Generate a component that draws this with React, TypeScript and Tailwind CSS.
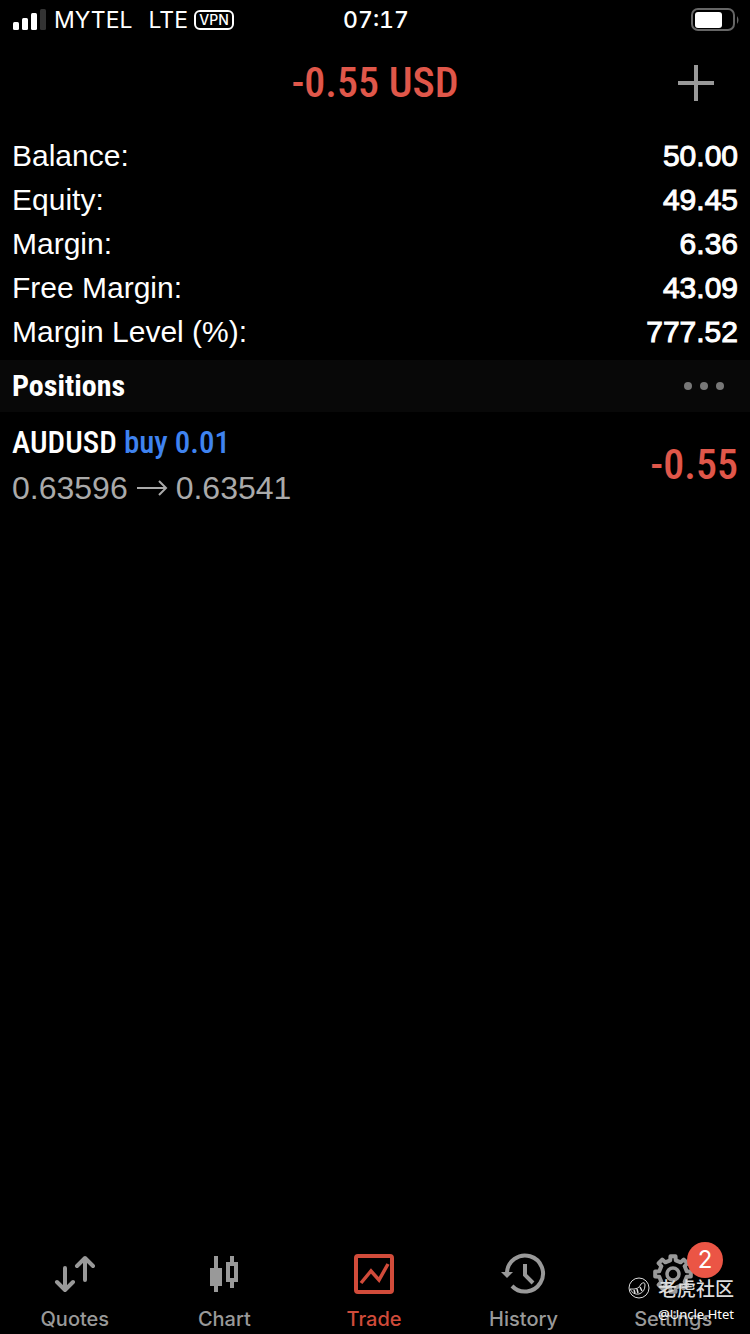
import type { ReactNode } from 'react';
import clsx from 'clsx';

const summary = [
  { label: 'Balance:', value: '50.00' },
  { label: 'Equity:', value: '49.45' },
  { label: 'Margin:', value: '6.36' },
  { label: 'Free Margin:', value: '43.09' },
  { label: 'Margin Level (%):', value: '777.52' },
];

const positions = [
  { symbol: 'AUDUSD', side: 'buy 0.01', open: '0.63596', current: '0.63541', profit: '-0.55' },
];

// Outline of an eight-toothed gear centred on (22, 22)
function gearPath() {
  const points: string[] = [];
  for (let i = 0; i < 8; i++) {
    const mid = (i * Math.PI) / 4 - Math.PI / 2;
    [
      [-0.2, 14],
      [-0.14, 18],
      [0.14, 18],
      [0.2, 14],
    ].forEach(([offset, r]) => {
      const a = mid + offset;
      points.push(`${(22 + r * Math.cos(a)).toFixed(2)} ${(22 + r * Math.sin(a)).toFixed(2)}`);
    });
  }
  return `M${points.join('L')}Z`;
}

function TabIcon({ children }: { children: ReactNode }) {
  return (
    <svg viewBox="0 0 44 44" className="w-11 h-11 overflow-visible" fill="none" stroke="currentColor" strokeWidth="4" aria-hidden="true">
      {children}
    </svg>
  );
}

const tabs = [
  {
    label: 'Quotes',
    icon: (
      <TabIcon>
        <path d="M12 16v21M4 30l8 8 8-8M32 28V7M24 14l8-8 8 8" strokeLinecap="round" strokeLinejoin="round" />
      </TabIcon>
    ),
  },
  {
    label: 'Chart',
    icon: (
      <TabIcon>
        <path d="M14 4v36M30 4v6M30 30v6" />
        <path d="M8 16h12v18H8z" fill="currentColor" stroke="none" />
        <path d="M26 12h8v16h-8z" />
      </TabIcon>
    ),
  },
  {
    label: 'Trade',
    active: true,
    icon: (
      <TabIcon>
        <rect x="4" y="4" width="36" height="36" rx="2" />
        <path d="M9 31l10-12 8 9 9-16" strokeWidth="3.5" />
      </TabIcon>
    ),
  },
  {
    label: 'History',
    icon: (
      <TabIcon>
        <path d="M5 21A18 18 0 1 1 10 34" />
        <path d="M-1 20h12l-6 6z" fill="currentColor" stroke="none" />
        <path d="M23 12v11l8 8" />
      </TabIcon>
    ),
  },
  {
    label: 'Settings',
    badge: 2,
    icon: (
      <TabIcon>
        <path d={gearPath()} strokeLinejoin="round" />
        <circle cx="22" cy="22" r="6" strokeWidth="3.5" />
      </TabIcon>
    ),
  },
];

function StatusBar() {
  return (
    <div className="grid grid-cols-3 items-center h-10 pl-3 pr-2.5 font-[Inter,sans-serif] text-[23px] leading-10">
      <div className="flex items-center whitespace-nowrap">
        <svg viewBox="0 0 34 22" className="w-[34px] h-[22px] mr-2" fill="currentColor" aria-hidden="true">
          <rect x="1" y="13" width="6" height="8" rx="1.5" />
          <rect x="10" y="9" width="6" height="12" rx="1.5" />
          <rect x="19" y="4" width="6" height="17" rx="1.5" />
          <rect x="28" y="0" width="6" height="21" rx="1.5" className="text-[#333333]" />
        </svg>
        <span>MYTEL</span>
        <span className="ml-4">LTE</span>
        <span className="ml-1.5 w-10 h-5 border-2 border-white rounded-md text-center text-sm leading-4 font-medium">VPN</span>
      </div>
      <time className="text-center font-medium tabular-nums">07:17</time>
      <svg viewBox="0 0 49 24" className="w-[49px] h-6 justify-self-end" aria-label="Battery">
        <rect x="1" y="1" width="42" height="21" rx="6" fill="none" stroke="#666666" strokeWidth="2" />
        <rect x="4" y="4" width="27" height="16" rx="3" fill="#ffffff" />
        <path d="M46 8q3 4 0 8z" fill="#666666" />
      </svg>
    </div>
  );
}

function Watermark() {
  return (
    <div className="absolute bottom-2 right-4 flex flex-col items-end pointer-events-none text-[#dddddd]">
      <div className="flex items-center gap-2">
        <svg viewBox="0 0 22 22" className="w-[22px] h-[22px]" fill="none" stroke="currentColor" aria-hidden="true">
          <circle cx="11" cy="11" r="10" strokeWidth="1" />
          <path d="M2 12q9 1 11-5 4-3 4 1 0 7-6 9-6 1-9-5z" />
          <path d="M6 13l1 3M9 12l1 4M12 10l2 4" strokeWidth="1.5" />
        </svg>
        <span className="font-['Noto_Sans_CJK_SC',sans-serif] text-[19px] leading-7 font-medium">老虎社区</span>
      </div>
      <span className="font-['Noto_Sans',sans-serif] text-[13px] leading-6 text-white">@Uncle.Htet</span>
    </div>
  );
}

export default function App() {
  return (
    <div className="relative min-h-screen flex flex-col bg-black text-white font-['Liberation_Sans',Arial,sans-serif]">
      <StatusBar />

      <header className="grid grid-cols-[1fr_auto_1fr] items-center px-9 h-[86px]">
        <h1 className="col-start-2 font-['Roboto_Condensed',Roboto,sans-serif] font-medium text-[42px] leading-none text-[#e0574a]">
          -0.55 USD
        </h1>
        <button type="button" aria-label="New order" className="justify-self-end text-[#999999]">
          <svg viewBox="0 0 36 36" className="w-9 h-9" stroke="currentColor" strokeWidth="4">
            <path d="M18 0v36M0 18h36" />
          </svg>
        </button>
      </header>

      <main className="flex-1">
        <dl className="px-3 pt-2 pb-1.5 text-[30px] leading-[44px]">
          {summary.map((row) => (
            <div key={row.label} className="flex justify-between">
              <dt>{row.label}</dt>
              <dd className="[-webkit-text-stroke:1px]">{row.value}</dd>
            </div>
          ))}
        </dl>

        <div className="flex items-center justify-between h-[52px] pl-3 pr-[26px] bg-[#080808]">
          <h2 className="font-['Roboto_Condensed',Roboto,sans-serif] font-bold text-[30px] leading-none">Positions</h2>
          <button type="button" aria-label="Position options" className="text-[#777777]">
            <svg viewBox="0 0 40 8" className="w-10 h-2" fill="currentColor">
              <circle cx="4" cy="4" r="4" />
              <circle cx="20" cy="4" r="4" />
              <circle cx="36" cy="4" r="4" />
            </svg>
          </button>
        </div>

        <ul>
          {positions.map((p) => (
            <li key={p.symbol} className="flex items-center justify-between px-3 py-2">
              <div>
                <p className="font-['Roboto_Condensed',Roboto,sans-serif] font-medium text-[31px] leading-[46px]">
                  {p.symbol} <span className="text-[#3f83f0]">{p.side}</span>
                </p>
                <p className="flex items-center gap-2 text-[32px] leading-[44px] text-[#aaaaaa]">
                  {p.open}
                  <svg viewBox="0 0 32 16" className="w-8 h-4" fill="none" stroke="currentColor" strokeWidth="2" aria-hidden="true">
                    <path d="M1 8h29M23 1l7 7-7 7" />
                  </svg>
                  {p.current}
                </p>
              </div>
              <span className="font-['Roboto_Condensed',Roboto,sans-serif] font-medium text-[42px] leading-none text-[#e0574a]">
                {p.profit}
              </span>
            </li>
          ))}
        </ul>
      </main>

      <nav className="grid grid-cols-5 pr-0.5 font-[Inter,sans-serif] text-xl">
        {tabs.map((tab) => (
          <a
            key={tab.label}
            href={`#${tab.label.toLowerCase()}`}
            className={clsx('flex flex-col items-center gap-2', tab.active ? 'text-[#d14b3a]' : 'text-[#999999]')}
          >
            <span className="relative">
              {tab.icon}
              {tab.badge && (
                <span className="absolute -top-2.5 -right-7 w-9 h-9 rounded-full bg-[#eb5545] text-white text-2xl leading-9 text-center">
                  {tab.badge}
                </span>
              )}
            </span>
            <span className="leading-[30px] font-medium">{tab.label}</span>
          </a>
        ))}
      </nav>

      <Watermark />
    </div>
  );
}
